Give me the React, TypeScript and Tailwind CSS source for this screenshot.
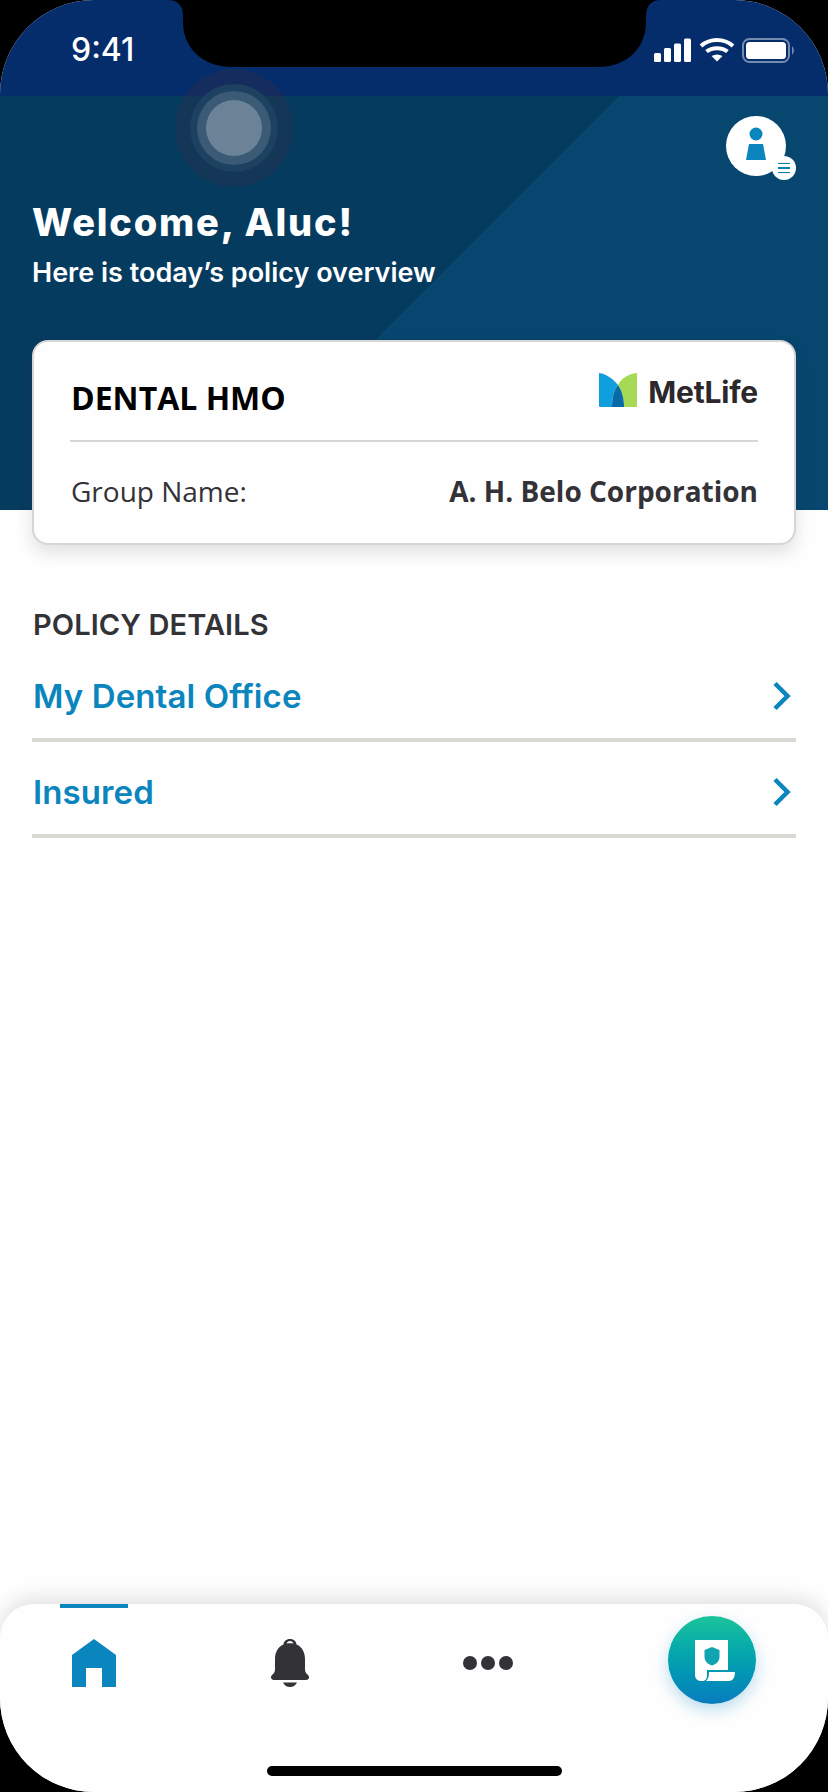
import React from "react";

const heading = "font-['Inter','Lato',sans-serif]";
const body = "font-['Open_Sans',sans-serif]";

function Notch() {
  return (
    <svg className="absolute left-0 top-0" width="828" height="70" viewBox="0 0 828 70">
      <path
        d="M168 0 C178 0 183 6 183 16 L183 24 C184 50 205 67 232 67 L598 67 C625 67 645 50 646 24 L646 16 C646 6 651 0 661 0 Z"
        fill="#000"
      />
    </svg>
  );
}

function StatusIcons() {
  return (
    <svg width="144" height="26" viewBox="0 0 144 26" fill="none">
      <rect x="1" y="15" width="7" height="9" rx="1.5" fill="#fff" />
      <rect x="11" y="10" width="7" height="14" rx="1.5" fill="#fff" />
      <rect x="21" y="5.500" width="7" height="18.500" rx="1.500" fill="#fff" />
      <rect x="31" y="0.500" width="7" height="23.500" rx="1.500" fill="#fff" />
      <path d="M48 8 C57 0 71 0 80 8" stroke="#fff" strokeWidth="4" />
      <path d="M53.500 13.500 C59 9 69 9 74.500 13.500" stroke="#fff" strokeWidth="4" />
      <path d="M58.500 18 C62 16 66 16 69.500 18 L64 23.500 Z" fill="#fff" />
      <rect x="90" y="1" width="46" height="23" rx="6.500" stroke="#fff" strokeOpacity="0.45" strokeWidth="2" />
      <rect x="93" y="4" width="40" height="17" rx="3.500" fill="#fff" />
      <path d="M139 8.500 C141.500 9.500 141.500 15.500 139 16.500 Z" fill="#fff" fillOpacity="0.45" />
    </svg>
  );
}

function Pulse() {
  return (
    <div className="absolute left-[175px] top-[69px] flex h-[118px] w-[118px] items-center justify-center rounded-full bg-[#2a2f4a]/40">
      <div className="flex h-[88px] w-[88px] items-center justify-center rounded-full bg-[#1d4160]">
        <div className="flex h-[74px] w-[74px] items-center justify-center rounded-full bg-[#3a5a76]">
          <div className="h-[58px] w-[58px] rounded-full border border-[#3a5a76] bg-[#6c8397]" />
        </div>
      </div>
    </div>
  );
}

function Profile() {
  return (
    <div className="absolute left-[726px] top-[116px] h-[60px] w-[60px] rounded-full bg-white">
      <svg width="60" height="60" viewBox="0 0 60 60">
        <circle cx="30" cy="18" r="6.500" fill="#0b85bd" />
        <path d="M23 28 L37 28 L40 44 L20 44 Z" fill="#0b85bd" />
      </svg>
      <div className="absolute left-[46px] top-[40px] flex h-[24px] w-[24px] flex-col items-center justify-center gap-[3px] rounded-full bg-white">
        <span className="h-[1.500px] w-[12px] bg-[#0f7fa8]" />
        <span className="h-[1.500px] w-[12px] bg-[#0f7fa8]" />
        <span className="h-[1.500px] w-[12px] bg-[#0f7fa8]" />
      </div>
    </div>
  );
}

function MetLifeMark() {
  return (
    <svg width="38" height="34" viewBox="0 0 38 34">
      <path d="M0 0 C8 1 14 6 19 12 C15 17 13 24 13 34 L1 34 Q0 34 0 33 Z" fill="#0f9fdc" />
      <path d="M38 0 C28 1 22 6 19 12 C23 18 25 26 25 34 L38 34 Z" fill="#a6d955" />
      <path d="M13 34 C13 24 15 17 19 12 C23 18 25 26 25 34 Z" fill="#0a6aa8" />
    </svg>
  );
}

function PolicyRow({ label }: { label: string }) {
  return (
    <div className="flex h-[96px] items-center justify-between border-b-4 border-[#dad8d3] pl-px pr-[4px] pt-[8px]">
      <span className={`${heading} text-[33px] font-semibold leading-[40px] tracking-[0.1px] text-[#0b85bd]`}>{label}</span>
      <svg width="20" height="30" viewBox="0 0 20 30" fill="none">
        <path d="M3 2.500 L15.500 15 L3 27.500" stroke="#0b85bd" strokeWidth="4.500" />
      </svg>
    </div>
  );
}

function BottomNav() {
  return (
    <div className="relative flex h-[188px] flex-col rounded-t-[34px] bg-[#fefefe] shadow-[0_-6px_18px_rgba(60,50,70,0.14)]">
      <div className="flex h-[162px] items-start pl-[60px]">
        <div className="flex h-[83px] w-[68px] flex-col items-center border-t-4 border-[#0b85bd] pt-[31px]">
          <svg width="44" height="48" viewBox="0 0 44 48">
            <path d="M22 0 L44 16 L44 48 L30 48 L30 29 L14 29 L14 48 L0 48 L0 16 Z" fill="#0b85bd" />
          </svg>
        </div>
        <div className="ml-[128px] flex w-[68px] justify-center pt-[35px]">
          <svg width="38" height="48" viewBox="0 0 38 48">
            <path
              fillRule="evenodd"
              d="M19 0 C23 0 25.500 2.500 25.500 5.500 C31.500 8 34 14 34 20 L34 30 C34 33 35 34 37 36 C39 38 38 41 35 41 L3 41 C0 41 -1 38 1 36 C3 34 4 33 4 30 L4 20 C4 14 6.500 8 12.500 5.500 C12.500 2.500 15 0 19 0 Z M15.500 4.500 C17.800 4 20.200 4 22.500 4.500 C22 3 20.500 2 19 2 C17.500 2 16 3 15.500 4.500 Z"
              fill="#333236"
            />
            <path d="M12 43.500 L26 43.500 C24.500 46.500 22 48 19 48 C16 48 13.500 46.500 12 43.500 Z" fill="#333236" />
          </svg>
        </div>
        <div className="ml-[130px] flex w-[68px] justify-center gap-[4px] pt-[52px]">
          <span className="h-[14px] w-[14px] shrink-0 rounded-full bg-[#333236]" />
          <span className="h-[14px] w-[14px] shrink-0 rounded-full bg-[#333236]" />
          <span className="h-[14px] w-[14px] shrink-0 rounded-full bg-[#333236]" />
        </div>
        <div className="ml-[146px] mt-[12px] flex h-[88px] w-[88px] items-center justify-center rounded-full bg-gradient-to-b from-[#1ac39a] to-[#0b7cbe] shadow-[0_6px_16px_rgba(11,133,189,0.28)]">
          <svg width="40" height="41" viewBox="0 0 40 41" className="ml-[6px]">
            <path d="M0 0 L33 0 L33 30 L12 30 L12 36 C12 39 10 41 7 41 L6 41 C2.500 41 0 38.500 0 35 Z" fill="#fff" />
            <path d="M14 32 L40 32 C40 37 38 41 34 41 L11 41 C13 39 14 37 14 32 Z" fill="#fff" />
            <path d="M17 7 L24.500 10 L24.500 17 C24.500 21 21 24.500 17 25.500 C13 24.500 9.500 21 9.500 17 L9.500 10 Z" fill="#0fa5b0" />
          </svg>
        </div>
      </div>
      <div className="mx-auto h-[10px] w-[295px] rounded-full bg-black" />
    </div>
  );
}

export default function App() {
  return (
    <div className="h-[1792px] w-[828px] bg-black">
      <div className="relative flex h-[1792px] w-[828px] flex-col overflow-hidden rounded-[94px] bg-[#fefefe]">
        <div className="flex h-[96px] shrink-0 items-start justify-between bg-[#052c6b] pl-[71px] pr-[31px] pt-[30px]">
          <span className={`${heading} text-[32px] font-medium leading-[40px] text-white`}>9:41</span>
          <div className="pt-[8px]">
            <StatusIcons />
          </div>
        </div>
        <div className="h-[414px] shrink-0 bg-[linear-gradient(135deg,#063b60_438px,#07466e_438px)] px-[32px] pt-[104px]">
          <h1 className={`${heading} text-[38px] font-extrabold leading-[44px] tracking-[1.8px] text-white`}>Welcome, Aluc!</h1>
          <p className={`${heading} mt-[13px] text-[27px] font-semibold leading-[32px] text-white`}>Here is today’s policy overview</p>
          <div className={`${body} mt-[51px] h-[205px] rounded-[16px] border-2 border-[#d8d6d3] bg-[#fefefe] px-[36px] shadow-[0_8px_16px_rgba(60,50,70,0.14)]`}>
            <div className="flex h-[100px] items-center justify-between border-b-2 border-[#d9d7d4]">
              <span className="pl-[1px] pt-[14px] text-[32px] font-bold leading-[40px] text-black">DENTAL HMO</span>
              <div className="flex items-center gap-[11px] pb-[3px]">
                <MetLifeMark />
                <span className={`${heading} pt-[4px] text-[30px] font-bold leading-[34px] tracking-[-0.2px] text-[#2b272a]`}>MetLife</span>
              </div>
            </div>
            <div className="flex h-[99px] items-center justify-between pb-[1px] text-[28px] text-[#333236]">
              <span className="pl-px">Group Name:</span>
              <span className="font-bold">A. H. Belo Corporation</span>
            </div>
          </div>
        </div>
        <div className="flex-1 px-[32px] pt-[98px]">
          <h2 className={`${heading} mb-[4px] pl-px text-[29px] font-semibold leading-[34px] tracking-[0.1px] text-[#333236]`}>POLICY DETAILS</h2>
          <PolicyRow label="My Dental Office" />
          <PolicyRow label="Insured" />
        </div>
        <BottomNav />
        <Notch />
        <Pulse />
        <Profile />
      </div>
    </div>
  );
}
